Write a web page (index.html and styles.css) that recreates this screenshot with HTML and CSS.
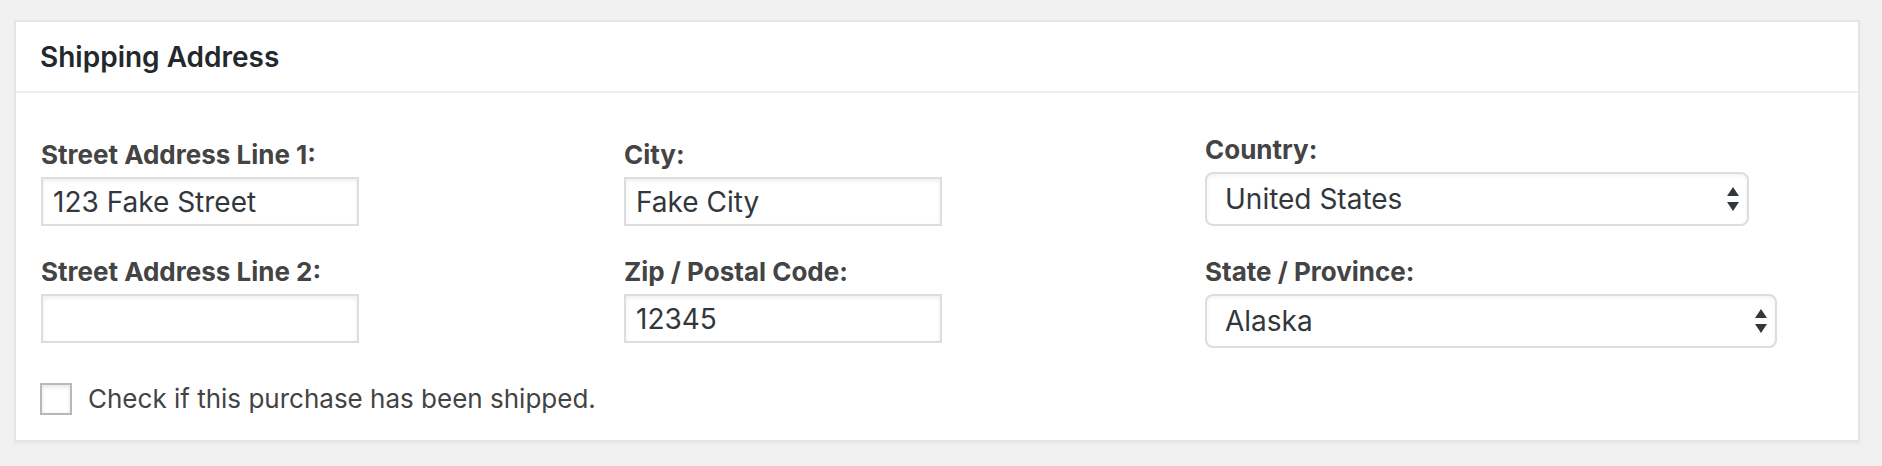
FILE: index.html
```html
<!DOCTYPE html>
<html lang="en">
<head>
<meta charset="utf-8">
<title>Shipping Address</title>
<link rel="stylesheet" href="styles.css">
</head>
<body>
<div class="page">
  <section class="postbox">
    <h2 class="postbox__title">Shipping Address</h2>
    <div class="postbox__inside">
      <div class="fields">
        <div class="field field--end">
          <label class="field__label">Street Address Line 1:</label>
          <div class="input">123 Fake Street</div>
        </div>
        <div class="field field--end">
          <label class="field__label">City:</label>
          <div class="input">Fake City</div>
        </div>
        <div class="field field--end">
          <label class="field__label">Country:</label>
          <div class="select select--country">
            <span class="select__value">United States</span>
            <svg class="select__arrow" width="12" height="24" viewBox="0 0 12 24"><polygon points="6,0 12,9 0,9"/><polygon points="0,15 12,15 6,24"/></svg>
          </div>
        </div>
        <div class="field">
          <label class="field__label">Street Address Line 2:</label>
          <div class="input"></div>
        </div>
        <div class="field">
          <label class="field__label">Zip / Postal Code:</label>
          <div class="input">12345</div>
        </div>
        <div class="field">
          <label class="field__label">State / Province:</label>
          <div class="select select--state">
            <span class="select__value">Alaska</span>
            <svg class="select__arrow" width="12" height="24" viewBox="0 0 12 24"><polygon points="6,0 12,9 0,9"/><polygon points="0,15 12,15 6,24"/></svg>
          </div>
        </div>
      </div>
      <div class="shipped">
        <span class="checkbox"></span>
        <span class="shipped__text">Check if this purchase has been shipped.</span>
      </div>
    </div>
  </section>
</div>
</body>
</html>
```

FILE: styles.css
```css
html, body {
  margin: 0;
  padding: 0;
  background: #f1f1f1;
}

body {
  font-family: Inter, "Liberation Sans", Arial, sans-serif;
  color: #444;
}

.page {
  padding: 20px 22px 23px 14px;
}

.postbox {
  background: #fff;
  border: 2px solid #e5e5e5;
  box-shadow: 0 2px 2px rgba(0, 0, 0, 0.04);
}

.postbox__title {
  margin: 0;
  padding: 17px 24px 15px 24px;
  font-size: 28px;
  line-height: 37px;
  font-weight: 600;
  color: #23282d;
  border-bottom: 2px solid #eee;
}

.postbox__inside {
  padding: 41px 25px 25px 25px;
}

.fields {
  display: grid;
  grid-template-columns: 583px 581px 1fr;
  row-gap: 30px;
}

.field {
  display: flex;
  flex-direction: column;
  align-items: flex-start;
  align-self: start;
}

.field--end {
  align-self: end;
}

.field__label {
  display: block;
  font-size: 26px;
  line-height: 32px;
  font-weight: 650;
  color: #444;
  margin-bottom: 6px;
}

.input {
  box-sizing: border-box;
  width: 318px;
  height: 49px;
  border: 2px solid #ddd;
  box-shadow: inset 0 2px 4px rgba(0, 0, 0, 0.07);
  background: #fff;
  padding: 2px 10px 0 10px;
  font-size: 28px;
  line-height: 43px;
  color: #32373c;
  white-space: nowrap;
}

.select {
  box-sizing: border-box;
  height: 54px;
  display: flex;
  align-items: center;
  justify-content: space-between;
  border: 2px solid #ddd;
  border-radius: 8px;
  box-shadow: inset 0 2px 4px rgba(0, 0, 0, 0.05);
  background: #fff;
  padding: 0 8px 0 18px;
  font-size: 28px;
  color: #32373c;
}

.select--country {
  width: 544px;
}

.select--state {
  width: 572px;
}

.select__arrow {
  fill: #32373c;
  flex: none;
}

.shipped {
  display: flex;
  align-items: center;
  gap: 16px;
  margin-top: 35px;
  margin-left: -1px;
}

.checkbox {
  box-sizing: border-box;
  width: 32px;
  height: 32px;
  border: 2px solid #b4b9be;
  background: #fff;
  box-shadow: inset 0 2px 4px rgba(0, 0, 0, 0.1);
  flex: none;
}

.shipped__text {
  font-size: 26px;
  line-height: 32px;
  color: #444;
}
```
